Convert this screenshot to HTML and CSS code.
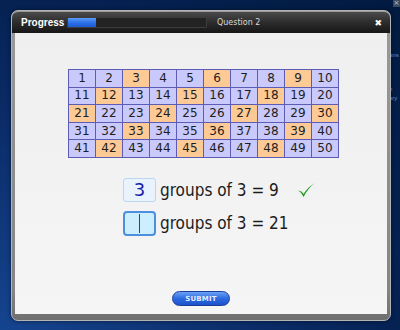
FILE: index.html
```html
<!DOCTYPE html>
<html lang="en">
<head>
  <meta charset="UTF-8">
  <title>Progress - Question 2</title>
  <link rel="stylesheet" href="styles.css">
</head>
<body>
  <div class="backdrop-text">
    <span class="bt1">ans</span>
    <span class="bt2">n</span>
    <span class="bt3">ary</span>
  </div>
  <span class="corner-close">&times;</span>

  <div class="dialog">
    <header class="bar">
      <span class="title">Progress</span>
      <div class="track"><div class="fill" style="width: 20%;"></div></div>
      <span class="question">Question 2</span>
      <span class="close">&#10006;</span>
    </header>

    <main class="content">
      <table class="grid">
        <tr><td>1</td><td>2</td><td class="hit">3</td><td>4</td><td>5</td><td class="hit">6</td><td>7</td><td>8</td><td class="hit">9</td><td>10</td></tr>
        <tr><td>11</td><td class="hit">12</td><td>13</td><td>14</td><td class="hit">15</td><td>16</td><td>17</td><td class="hit">18</td><td>19</td><td>20</td></tr>
        <tr><td class="hit">21</td><td>22</td><td>23</td><td class="hit">24</td><td>25</td><td>26</td><td class="hit">27</td><td>28</td><td>29</td><td class="hit">30</td></tr>
        <tr><td>31</td><td>32</td><td class="hit">33</td><td>34</td><td>35</td><td class="hit">36</td><td>37</td><td>38</td><td class="hit">39</td><td>40</td></tr>
        <tr><td>41</td><td class="hit">42</td><td>43</td><td>44</td><td class="hit">45</td><td>46</td><td>47</td><td class="hit">48</td><td>49</td><td>50</td></tr>
      </table>

      <div class="equations">
        <div class="eq">
          <span class="answer done">3</span>
          <span class="eq-text">groups of 3 = 9</span>
          <svg class="tick" width="19" height="16" viewBox="0 0 19 16">
            <path d="M1 8.5 C3 9.5 5 11.5 6.5 15 C9.5 9 13.5 4 18 1 C13 3.5 9.5 7.5 6.5 12 C5.5 10 3.5 8.8 1 8.5 Z" fill="#1b9b1b"/>
          </svg>
        </div>
        <div class="eq">
          <span class="answer active"><i class="caret"></i></span>
          <span class="eq-text">groups of 3 = 21</span>
        </div>
      </div>

      <div class="actions">
        <button class="submit">SUBMIT</button>
      </div>
    </main>
  </div>
</body>
</html>
```

FILE: styles.css
```css
* {
  margin: 0;
  padding: 0;
  box-sizing: border-box;
}
body, html {
  height: 100%;
  overflow: hidden;
}
body {
  position: relative;
  font-family: "DejaVu Sans", Verdana, sans-serif;
  background: radial-gradient(ellipse at 0% 100%, #15448f 0%, #0b2c68 45%, #04204f 75%, #021a40 100%);
  padding: 10px 0 0 11px;
}
.backdrop-text {
  position: absolute;
  top: 51px;
  left: 389px;
  font-family: "Liberation Sans", Arial, sans-serif;
  font-size: 6px;
  color: #6f8fc0;
  line-height: 9px;
}
.backdrop-text span {
  display: block;
}
.bt2 {
  margin-top: 25px;
}
.corner-close {
  position: absolute;
  top: 0;
  left: 393px;
  width: 7px;
  height: 7px;
  background: #3a4a60;
  color: #c0c8d0;
  font-size: 7px;
  line-height: 7px;
  text-align: center;
}
.dialog {
  position: relative;
  width: 380px;
  height: 311px;
  background: linear-gradient(#9a9a9a, #858585 90%, #6f6f6f);
  border: 1px solid #b4b4b4;
  border-radius: 7px;
  padding: 1px 0 6px 0;
  display: flex;
  flex-direction: column;
  box-shadow: 0 0 4px rgba(0, 0, 0, 0.5);
}
.bar {
  height: 21px;
  background: linear-gradient(#4a4a4a, #2c2c2c 50%, #161616);
  border-radius: 6px 6px 0 0;
  display: flex;
  align-items: center;
  padding: 0 8px 0 9px;
}
.title {
  font-family: "Liberation Sans", Arial, sans-serif;
  font-weight: bold;
  font-size: 10px;
  color: #ffffff;
  width: 46px;
}
.track {
  width: 140px;
  height: 11px;
  background: #232323;
  border: 1px solid #3c3c3c;
  border-radius: 1px;
}
.fill {
  height: 100%;
  background: linear-gradient(#5a9af6, #2a6ee8 55%, #1c5ad0);
}
.question {
  font-size: 8px;
  color: #d8d8d8;
  margin-left: 10px;
}
.close {
  margin-left: auto;
  color: #ffffff;
  font-size: 9px;
  font-weight: bold;
}
.content {
  flex: 1;
  margin: 0 3px;
  background: linear-gradient(#efefef, #f5f5f5);
  display: flex;
  flex-direction: column;
  padding-top: 36px;
}
.grid {
  align-self: flex-start;
  border-collapse: collapse;
  margin-left: 53px;
  font-size: 12px;
  color: #1e1e1e;
}
.grid td {
  width: 27px;
  height: 17.6px;
  padding: 0;
  text-align: center;
  background: #c9c9fb;
  border: 1px solid #5c5cb4;
  line-height: 15px;
}
.grid td.hit {
  background: #fdc994;
}
.equations {
  margin: 20px 0 0 108px;
  display: flex;
  flex-direction: column;
  gap: 9px;
}
.eq {
  display: flex;
  align-items: center;
  gap: 4px;
}
.answer {
  display: flex;
  align-items: center;
  justify-content: center;
  width: 33px;
  height: 24px;
  border-radius: 3px;
  font-size: 18px;
}
.answer.done {
  background: #e8f3fd;
  border: 1px solid #bcd6f2;
  color: #1c1ca8;
}
.answer.active {
  height: 25px;
  background: #cdeefc;
  border: 2px solid #4c8fdf;
  border-radius: 4px;
}
.caret {
  width: 1px;
  height: 19px;
  background: #444;
}
.eq-text {
  font-size: 17px;
  color: #1c1c1c;
  font-stretch: condensed;
}
.tick {
  margin-left: 14px;
}
.actions {
  margin-top: auto;
  padding-bottom: 8px;
  display: flex;
  justify-content: center;
}
.submit {
  width: 58px;
  height: 15px;
  border-radius: 8px;
  border: 1px solid #1b3c98;
  background: linear-gradient(#6aa2f6, #2e6ae0 50%, #1c52cc);
  color: #e4ecff;
  font-family: "DejaVu Sans", sans-serif;
  font-weight: bold;
  font-size: 7px;
  letter-spacing: 0.2px;
}
```
